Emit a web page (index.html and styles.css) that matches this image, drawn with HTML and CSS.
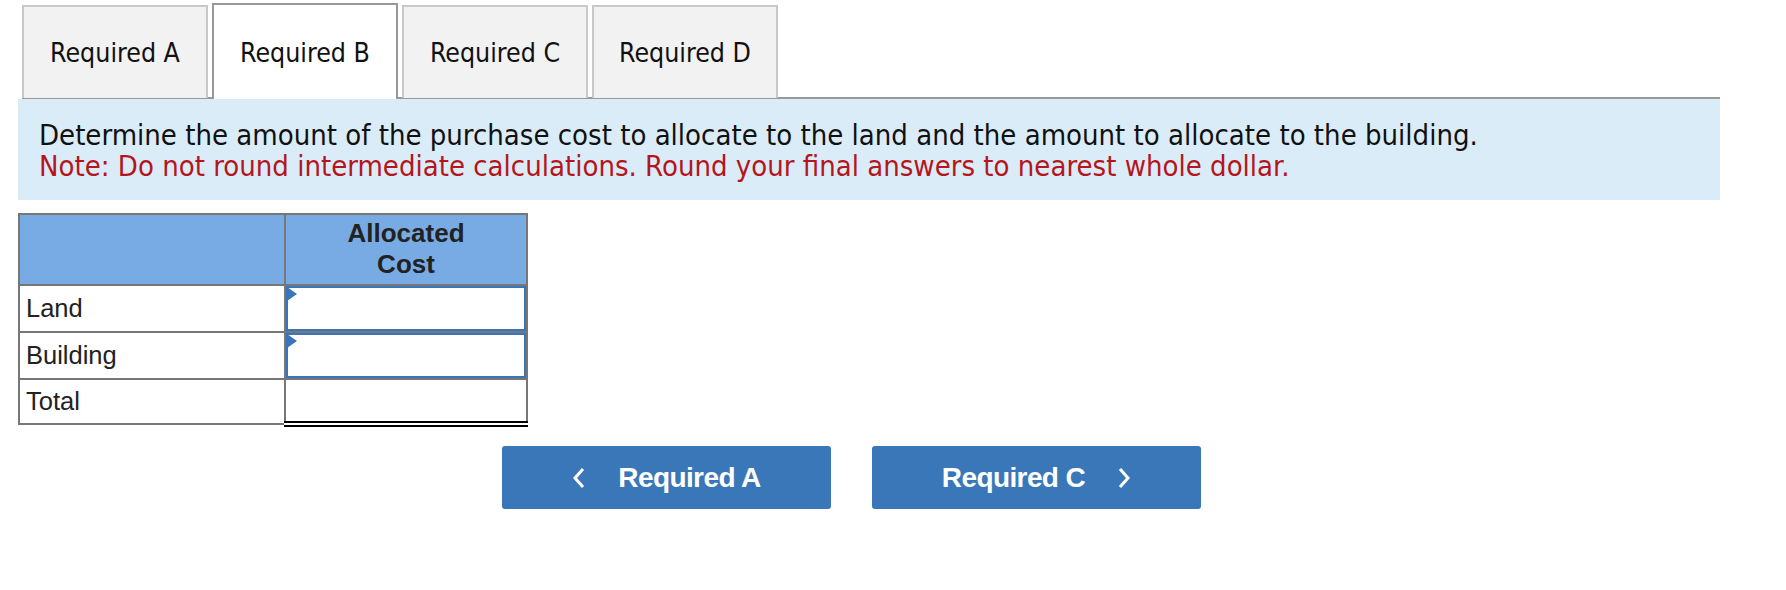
FILE: index.html
```html
<!DOCTYPE html>
<html>
<head>
<meta charset="utf-8">
<link rel="stylesheet" href="styles.css">
</head>
<body>
<div class="page">
  <div class="tabs">
    <div class="tab">Required A</div>
    <div class="tab active">Required B</div>
    <div class="tab">Required C</div>
    <div class="tab">Required D</div>
  </div>
  <div class="prompt">
    <p class="q">Determine the amount of the purchase cost to allocate to the land and the amount to allocate to the building.</p>
    <p class="note">Note: Do not round intermediate calculations. Round your final answers to nearest whole dollar.</p>
  </div>
  <table class="grid">
    <thead>
      <tr><th class="blank"></th><th class="head">Allocated<br>Cost</th></tr>
    </thead>
    <tbody>
      <tr><td class="label">Land</td><td class="inp"><div class="box"><span class="flag"></span></div></td></tr>
      <tr><td class="label">Building</td><td class="inp"><div class="box"><span class="flag"></span></div></td></tr>
      <tr class="total-row"><td class="label">Total</td><td class="total"></td></tr>
    </tbody>
  </table>
  <div class="nav">
    <div class="btn"><svg class="chev" width="14" height="22" viewBox="0 0 14 22"><path d="M11 2 L3 11 L11 20" fill="none" stroke="#fff" stroke-width="3"/></svg><span>Required A</span></div>
    <div class="btn"><span>Required C</span><svg class="chev" width="14" height="22" viewBox="0 0 14 22"><path d="M3 2 L11 11 L3 20" fill="none" stroke="#fff" stroke-width="3"/></svg></div>
  </div>
</div>
</body>
</html>
```
FILE: styles.css
```css
html, body { margin: 0; padding: 0; background: #fff; }
.page { padding: 3px 0 0 18px; width: 1702px; }
.tabs {
  display: flex;
  gap: 4px;
  margin-left: 4px;
  height: 94px;
  border-bottom: 2px solid #999;
  align-items: flex-end;
}
.tab {
  box-sizing: border-box;
  width: 186px;
  height: 93px;
  margin-bottom: -1px;
  background: #f2f2f2;
  border: 2px solid #c8c8c8;
  border-bottom: none;
  display: flex;
  align-items: center;
  justify-content: center;
  font-family: "DejaVu Sans Condensed", "DejaVu Sans", sans-serif;
  font-stretch: condensed;
  font-size: 26.5px;
  color: #111;
}
.tab.active {
  background: #fff;
  border-color: #999;
  height: 96px;
  margin-bottom: -2px;
}
.prompt {
  background: #dbecf9;
  height: 101px;
  box-sizing: border-box;
  padding: 21px 21px 0;
  font-family: "DejaVu Sans Condensed", "DejaVu Sans", sans-serif;
  font-stretch: condensed;
  font-size: 29px;
  line-height: 31px;
}
.prompt p { margin: 0; }
.q { color: #111; }
.note { color: #b5151b; }
.grid {
  margin-top: 13px;
  border-collapse: collapse;
  font-family: "Liberation Sans", Arial, sans-serif;
  font-size: 25.5px;
  color: #222;
}
.grid th, .grid td { border: 2px solid #777; padding: 0; }
.grid th { background: #78abe3; height: 66px; }
.blank { width: 264px; }
.head { width: 240px; font-weight: bold; font-size: 26px; line-height: 31px; padding-top: 3px !important; vertical-align: top; }
.grid td { height: 45px; }
.grid .total-row td { height: 41px; }
.label { padding-left: 6px !important; vertical-align: middle; }
.inp { vertical-align: top; }
.box {
  position: relative;
  box-sizing: border-box;
  height: 45px;
  border: 2px solid #3a74b9;
  background: #fff;
}
.flag {
  position: absolute;
  left: -1px;
  top: -1px;
  width: 0;
  height: 0;
  border-top: 7px solid transparent;
  border-bottom: 7px solid transparent;
  border-left: 10px solid #3a74b9;
}
.total {
  border-top: 2px solid #000 !important;
  border-bottom: 6px double #000 !important;
}
.nav {
  display: flex;
  gap: 41px;
  margin: 19px 0 0 484px;
}
.btn {
  box-sizing: border-box;
  width: 329px;
  height: 63px;
  background: #3a77b9;
  border-radius: 3px;
  display: flex;
  align-items: center;
  justify-content: center;
  gap: 32px;
  color: #fff;
  font-family: "Liberation Sans", Arial, sans-serif;
  font-weight: bold;
  font-size: 28px;
  letter-spacing: -0.6px;
}
.chev { display: block; }
```
